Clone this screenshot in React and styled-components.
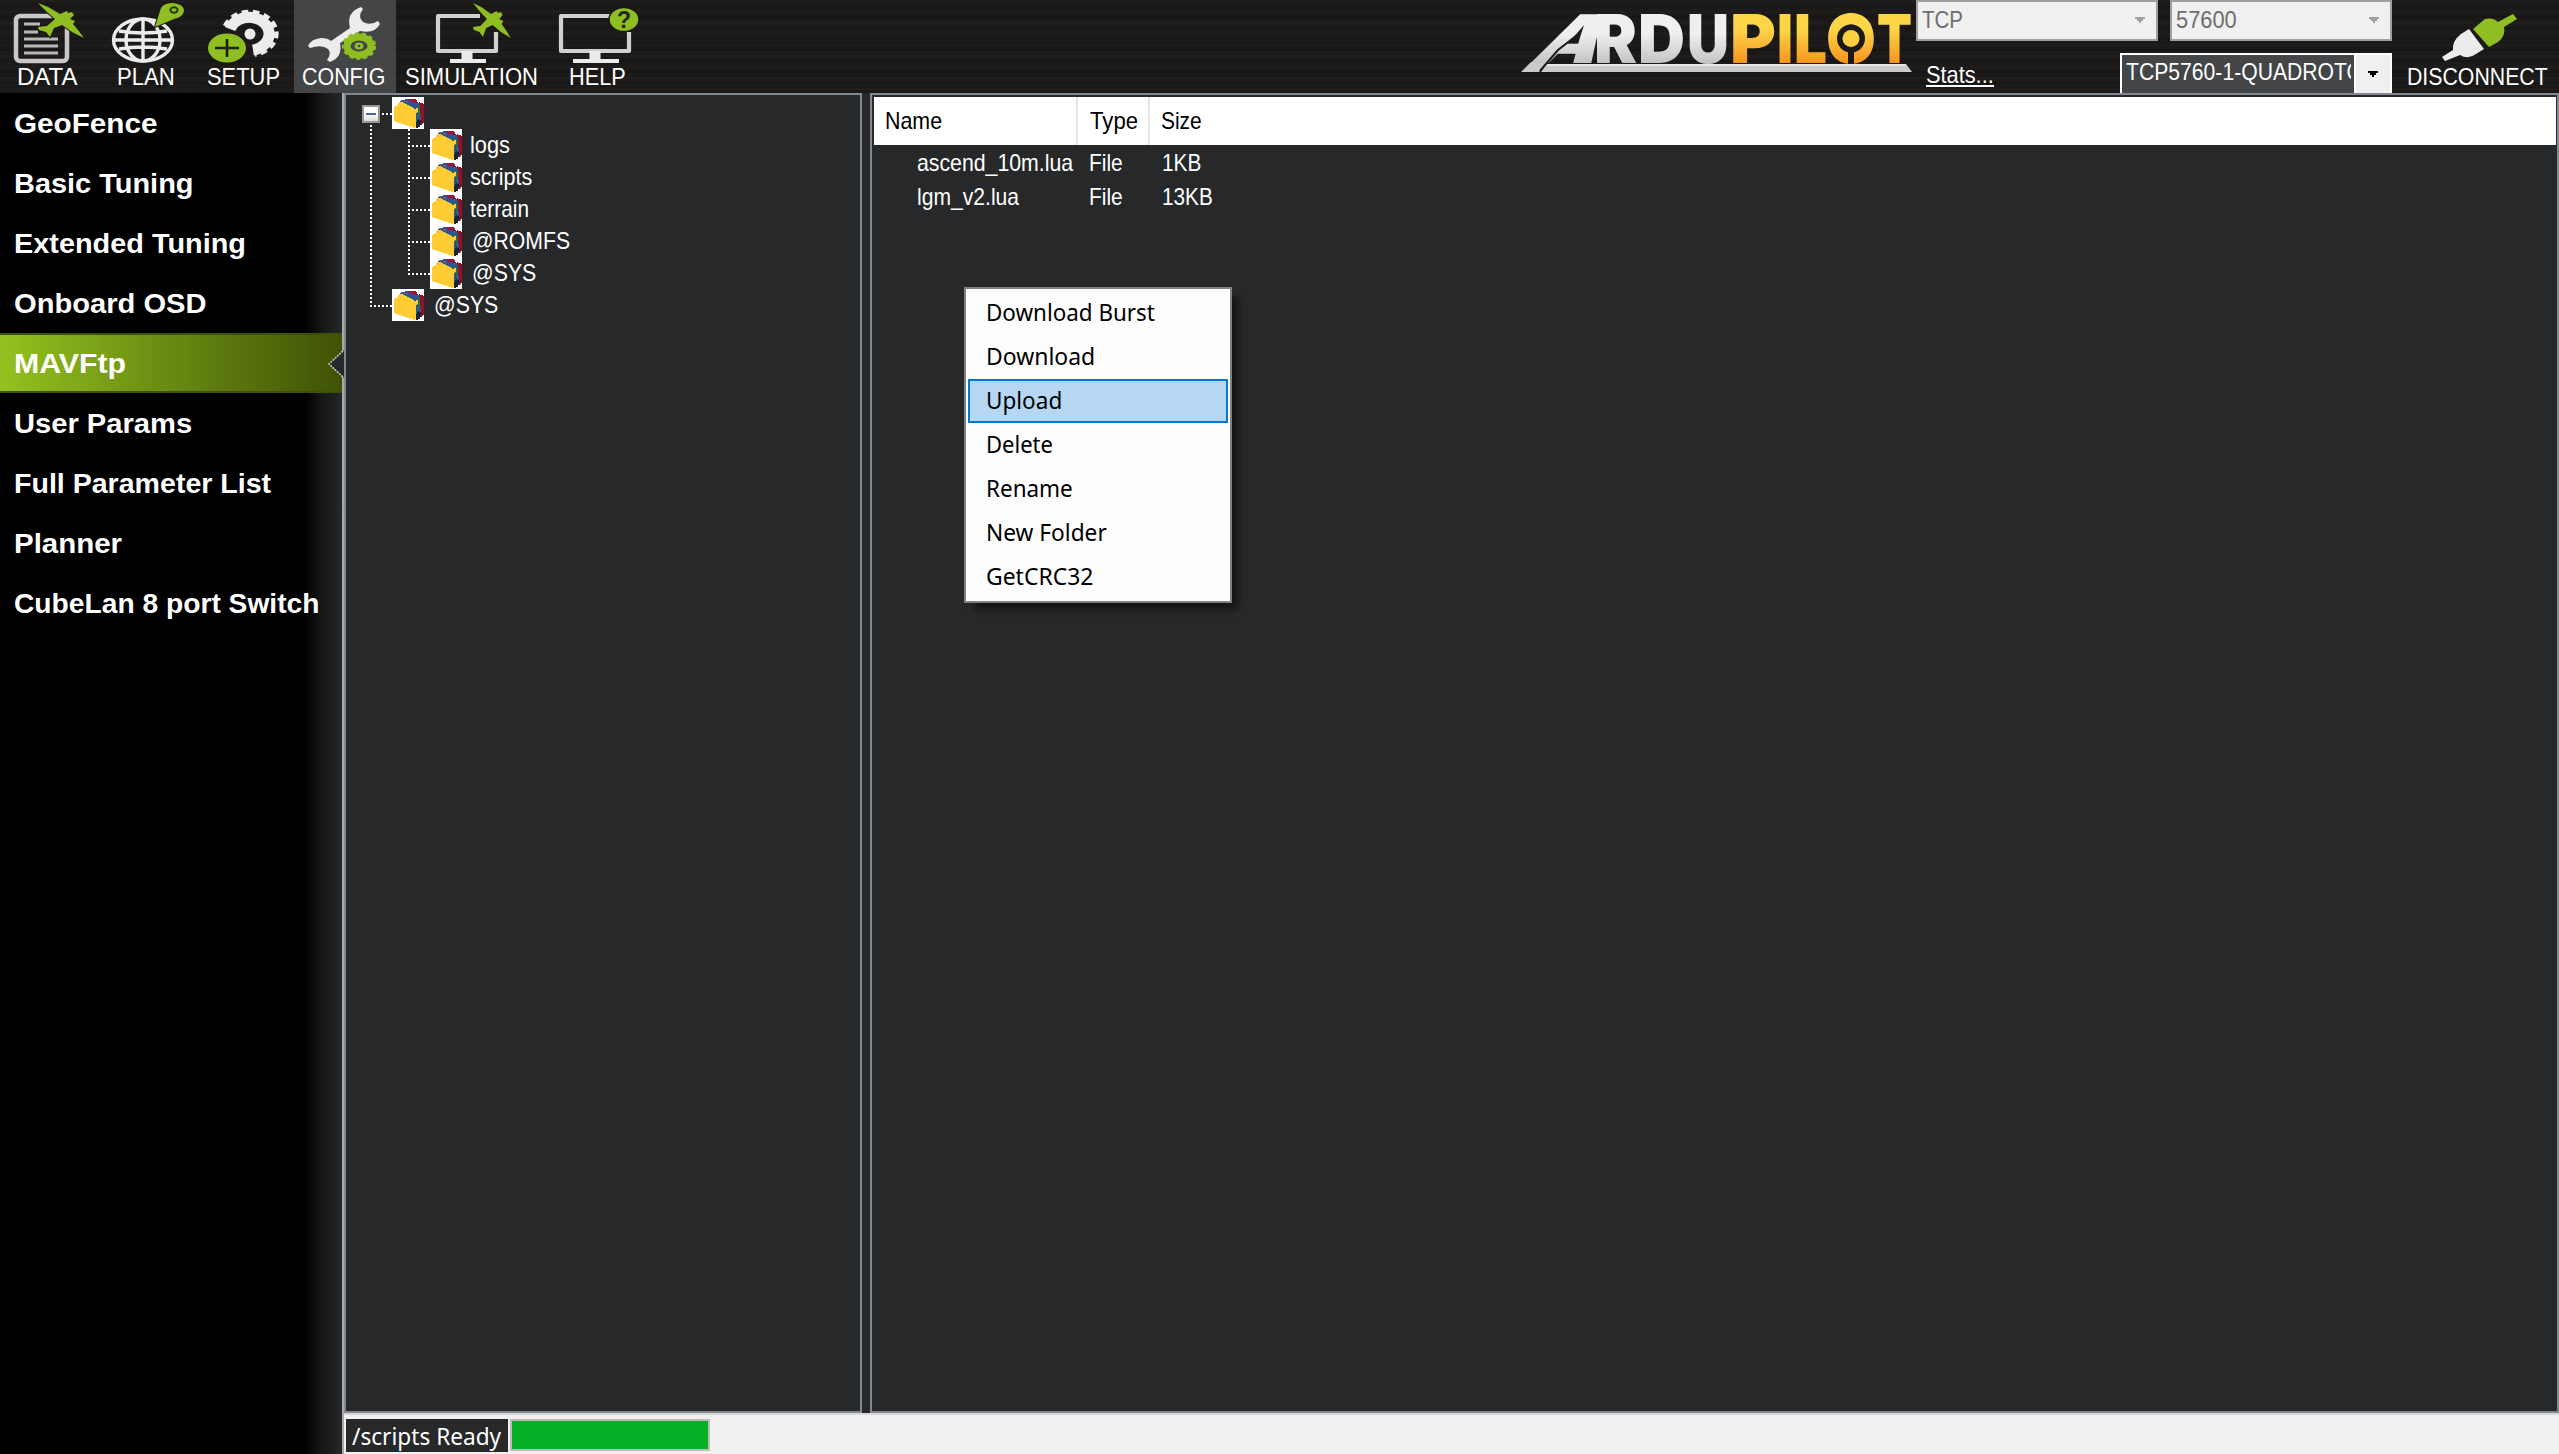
import React, { useLayoutEffect, useRef, useState } from "react";
import styled, { createGlobalStyle, css } from "styled-components";

const Global = createGlobalStyle`
  * { box-sizing: border-box; }
  html, body { margin: 0; background: #262829; }
  body { font-family: "Liberation Sans", Arial, sans-serif; font-size: 24px; color: #fff; overflow: hidden; }
`;

/* ---------- text that is condensed or widened to a given width ---------- */
const FitBox = styled.span`
  display: block;
  flex: none;
  width: ${(p) => p.$w}px;
  white-space: nowrap;
`;
const FitInner = styled.span`
  display: inline-block;
  transform-origin: 0 0;
`;
function Fit({ w, children }) {
  const ref = useRef(null);
  const [k, setK] = useState(1);
  useLayoutEffect(() => {
    setK(w / ref.current.offsetWidth);
  }, [w, children]);
  return (
    <FitBox $w={w}>
      <FitInner ref={ref} style={{ transform: `scaleX(${k})` }}>{children}</FitInner>
    </FitBox>
  );
}

/* ---------- frame ---------- */
const Window = styled.div`
  width: 2559px;
  height: 1454px;
  display: flex;
  flex-direction: column;
  overflow: hidden;
`;
const Toolbar = styled.header`
  height: 93px;
  flex: none;
  display: flex;
  background:
    repeating-linear-gradient(180deg, rgba(255, 255, 255, 0.018) 0 2px, transparent 2px 5px, rgba(0, 0, 0, 0.16) 5px 7px, transparent 7px 11px),
    #1c1a18;
`;
const Tool = styled.button`
  width: ${(p) => p.$w}px;
  height: 93px;
  padding: 0;
  border: 0;
  display: flex;
  flex-direction: column;
  align-items: center;
  font: inherit;
  line-height: 28px;
  color: #fff;
  background: ${(p) => (p.$active ? "#434547" : "transparent")};
  & > svg { display: block; flex: none; }
`;
const ToolLabel = styled.span`
  display: block;
  width: 100%;
  padding-left: ${(p) => p.$x}px;
  text-align: left;
`;
const Spacer = styled.div`
  width: ${(p) => p.$w}px;
  flex: none;
`;
const Connection = styled.div`
  width: 476px;
  height: 93px;
  flex: none;
  display: flex;
  flex-direction: column;
  justify-content: space-between;
`;
const ConnRow = styled.div`
  display: flex;
  justify-content: space-between;
`;
const Combo = styled.div`
  width: ${(p) => p.$w}px;
  height: 41px;
  display: flex;
  justify-content: space-between;
  align-items: center;
  border: 2px solid #a0a0a0;
  background: #f0f0f0;
  color: #6d6d6d;
  padding: 0 11px 2px 4px;
  line-height: 28px;
`;
const PortCombo = styled.div`
  width: 272px;
  height: 40px;
  display: flex;
  border: 2px solid #fff;
  border-bottom: 0;
  background: #434547;
  line-height: 28px;
  padding-top: 3px;
`;
const PortText = styled.div`
  width: 225px;
  margin-left: 4px;
  overflow: hidden;
  flex: none;
`;
const PortButton = styled.div`
  margin: -3px 0 0 auto;
  width: 36px;
  border-left: 2px solid #fff;
  background: #f0f0f0;
  display: flex;
  justify-content: center;
  align-items: center;
`;
const Stats = styled.a`
  margin: 8px 0 0 10px;
  height: 26px;
  line-height: 28px;
  border-bottom: 2px solid #fff;
`;
const Main = styled.div`
  flex: 1;
  display: flex;
  min-height: 0;
`;

/* ---------- sidebar ---------- */
const Sidebar = styled.nav`
  width: 344px;
  flex: none;
  border-right: 2px solid #a8a8a8;
  background: linear-gradient(90deg, #000 305px, #161717 322px, #262829 342px);
`;
const NavItem = styled.div`
  position: relative;
  height: 60px;
  padding: 14px 0 0 14px;
  font-size: 27px;
  font-weight: 700;
  line-height: 34px;
  ${(p) => p.$active && css`
    background: linear-gradient(90deg, #94c11f, #3f5205);
    box-shadow: inset 0 2px #3d5206, inset 0 -2px #3d5206;
  `}
`;
const Notch = styled.svg`
  position: absolute;
  right: -2px;
  top: 17px;
`;

/* ---------- content ---------- */
const Content = styled.section`
  flex: 1;
  display: flex;
  flex-direction: column;
  min-width: 0;
`;
const Panes = styled.div`
  height: 1320px;
  display: flex;
  gap: 8px;
  background: #262829;
`;
const Tree = styled.div`
  width: 518px;
  flex: none;
  border: 2px solid #828790;
  padding: 2px 0 0 16px;
`;
const TreeRow = styled.div`
  height: 32px;
  display: flex;
`;
const vdots = "repeating-linear-gradient(180deg, #fff 0 2px, transparent 2px 4px)";
const hdots = "repeating-linear-gradient(90deg, #fff 0 2px, transparent 2px 4px)";
const guides = {
  root: css`background: ${vdots} 8px 28px / 2px 4px no-repeat, ${hdots} 20px 16px / 10px 2px no-repeat;`,
  through: css`background: ${vdots} 8px 0 / 2px 32px no-repeat;`,
  end: css`background: ${vdots} 8px 0 / 2px 16px no-repeat, ${hdots} 8px 16px / 22px 2px no-repeat;`,
  branch: css`background: ${vdots} 16px 0 / 2px 32px no-repeat, ${hdots} 20px 16px / 18px 2px no-repeat;`,
  last: css`background: ${vdots} 16px 0 / 2px 18px no-repeat, ${hdots} 16px 16px / 22px 2px no-repeat;`,
};
const Guide = styled.div`
  width: ${(p) => p.$w}px;
  height: 32px;
  flex: none;
  ${(p) => guides[p.$kind]}
`;
const Expander = styled.div`
  width: 18px;
  height: 18px;
  margin-top: 8px;
  border: 2px solid #979797;
  background: linear-gradient(#fff 50%, #dcdcdc);
  display: flex;
  align-items: center;
  justify-content: center;
  &::before { content: ""; width: 10px; height: 2px; background: #4b63a7; }
`;
const TreeLabel = styled.div`
  padding-left: ${(p) => p.$x}px;
  line-height: 28px;
  padding-top: ${(p) => p.$y || 0}px;
`;
const List = styled.div`
  position: relative;
  flex: 1;
  border: 2px solid #828790;
  padding: 2px 1px 0 2px;
`;
const ListRow = styled.div`
  display: flex;
  height: 34px;
  line-height: 28px;
  padding-top: 4px;
`;
const ListHead = styled(ListRow)`
  height: 48px;
  padding: 0;
  background: #fff;
  color: #000;
`;
const Cell = styled.div`
  width: ${(p) => p.$w}px;
  padding-left: ${(p) => p.$x}px;
  flex: none;
`;
const HeadCell = styled(Cell)`
  border-right: ${(p) => (p.$end ? 0 : "2px solid #e5e5e5")};
  padding-top: 10px;
`;
const Menu = styled.div`
  position: absolute;
  left: 92px;
  top: 192px;
  width: 268px;
  border: 2px solid #808080;
  padding: 2px;
  background: #fdfdfd;
  color: #000;
  box-shadow: 8px 8px 7px -2px rgba(0, 0, 0, 0.5);
  font-family: "Noto Sans", "Open Sans", sans-serif;
`;
const MenuItem = styled.div`
  height: 44px;
  padding-left: 16px;
  line-height: 38px;
  border: 2px solid ${(p) => (p.$hot ? "#0078d7" : "transparent")};
  background: ${(p) => (p.$hot ? "#b5d7f3" : "transparent")};
`;
const StatusBar = styled.footer`
  flex: 1;
  display: flex;
  gap: 2px;
  padding: 4px 0 0 2px;
  border-top: 2px solid #d7d7d7;
  background: #f0f0f0;
`;
const StatusText = styled.div`
  width: 162px;
  height: 33px;
  padding-left: 6px;
  line-height: 34px;
  background: #262829;
  font-family: "Noto Sans", "Open Sans", sans-serif;
`;
const Progress = styled.div`
  width: 200px;
  height: 32px;
  border: 2px solid #bcbcbc;
  background: #06b025;
`;

/* ---------- drawings ---------- */
const GREEN = "#8fbe22";
const LIGHT = "#ececec";

const ToolIcon = styled.svg.attrs((p) => ({ width: p.$w, height: 63 }))`
  overflow: visible;
`;
const planePoints =
  "0,0 10,4 22,11 29,8 30,10 34,9 36,12 32,16 37,18 35,21 40,27 46,35 34,29 24,22 16,25 12,34 8,29 1,27 0,24 9,23 17,16 9,9";
const Plane = ({ x, y, k = 1 }) => (
  <polygon points={planePoints} transform={`translate(${x} ${y}) scale(${k} 1)`} fill={GREEN} stroke="#1c1a18" strokeWidth="2" paintOrder="stroke" />
);

const DataIcon = () => (
  <ToolIcon $w={94}>
    <rect x="16" y="16" width="51" height="45" rx="4" fill="none" stroke="#c9c7c8" strokeWidth="4.5" />
    <path d="M24 24h16M24 32h14M24 39h34M24 46h34M24 53h34" stroke="#b9b8b8" strokeWidth="3" />
    <Plane x={38} y={3} />
  </ToolIcon>
);
const PlanIcon = () => (
  <ToolIcon $w={103}>
    <g fill="none" stroke={LIGHT} strokeWidth="3.4">
      <ellipse cx="49" cy="40" rx="29.500" ry="21" />
      <ellipse cx="49" cy="40" rx="17" ry="21" />
      <path d="M49 19v42M19 40h60M25 31q24 4 48 0M25 49q24 -4 48 0" />
    </g>
    <path d="M61 27L67 8Q70 3 79 3Q90 4 90 11Q89 17 80 19Z" fill={GREEN} stroke="#1c1a18" strokeWidth="2" paintOrder="stroke" />
    <ellipse cx="80" cy="10" rx="3.600" ry="2.800" fill="none" stroke="#2d3a12" strokeWidth="2" />
  </ToolIcon>
);
const SetupIcon = () => (
  <ToolIcon $w={97}>
    <path d="M33 29A20 16.500 0 1 1 56 50" fill="none" stroke={LIGHT} strokeWidth="11" />
    <path d="M28 26A26.500 21.500 0 1 1 58 54.500" fill="none" stroke={LIGHT} strokeWidth="4.500" strokeDasharray="6.500 4.500" />
    <circle cx="53" cy="34" r="5.5" fill={LIGHT} />
    <ellipse cx="30" cy="48" rx="19" ry="14.500" fill={GREEN} stroke="#1c1a18" strokeWidth="2" paintOrder="stroke" />
    <path d="M30 39v18M18 48h24" stroke="#1c2209" strokeWidth="2.6" />
  </ToolIcon>
);
const ConfigIcon = () => (
  <ToolIcon $w={102}>
    <path d="M14 46Q17 39 27 38Q34 38 37 41L56 28Q52 12 67 7L69 9Q63 17 69 22Q76 26 84 21L86 24Q81 34 66 31L46 43Q49 57 36 62L33 60Q38 53 34 49Q28 44 16 48Z" fill={LIGHT} />
    <ellipse cx="65" cy="46" rx="12" ry="9" fill="none" stroke={GREEN} strokeWidth="7" />
    <ellipse cx="65" cy="46" rx="16" ry="12.500" fill="none" stroke={GREEN} strokeWidth="2.5" strokeDasharray="4 3" />
    <ellipse cx="65" cy="46" rx="4.500" ry="3.500" fill={GREEN} />
    <circle cx="65" cy="46" r="1.3" fill="#434547" />
  </ToolIcon>
);
const Monitor = ({ x, w }) => (
  <g fill="none" stroke="#d2d0d1" strokeWidth="4.2" strokeLinejoin="round">
    <path d={`M${x + w - 16} 16H${x}V51H${x + w}V32`} />
    <path d={`M${x + 12} 61h${w - 22}`} stroke={LIGHT} strokeWidth="4" />
    <path d={`M${x + w / 2} 51v10`} stroke={LIGHT} strokeWidth="11" />
  </g>
);
const SimIcon = () => (
  <ToolIcon $w={151}>
    <Monitor x={42} w={58} />
    <Plane x={77} y={3} k={0.82} />
  </ToolIcon>
);
const HelpIcon = () => (
  <ToolIcon $w={101}>
    <Monitor x={14} w={68} />
    <ellipse cx="77" cy="19.500" rx="15" ry="12" fill={GREEN} stroke="#1c1a18" strokeWidth="1.500" />
    <text x="77" y="27.500" textAnchor="middle" fontFamily="Liberation Sans" fontWeight="700" fontSize="23" fill="#22280f">?</text>
  </ToolIcon>
);
const PlugIcon = () => (
  <ToolIcon $w={167}>
    <path d="M53 61L50 57L61 50Q60 41 69 34L77 29L92 49L84 54Q76 60 68 55Z" fill={LIGHT} />
    <path d="M81 29L93 19Q101 17 106 22L121 14L125 19L112 27Q114 36 106 42L97 47Z" fill={GREEN} />
  </ToolIcon>
);

const letters = [
  ["R", 94, 43], ["D", 138, 47], ["U", 187, 42],
  ["P", 230, 46], ["I", 277, 16], ["L", 294, 33], ["O", 326, 50], ["T", 377, 35],
];
const Logo = () => (
  <svg width="416" height="93">
    <defs>
      <linearGradient id="silver" gradientUnits="userSpaceOnUse" x1="0" y1="14" x2="0" y2="63">
        <stop offset="0.4" stopColor="#efefef" /><stop offset="1" stopColor="#c4c4c6" />
      </linearGradient>
      <linearGradient id="gold" gradientUnits="userSpaceOnUse" x1="0" y1="14" x2="0" y2="63">
        <stop offset="0.3" stopColor="#fdd648" /><stop offset="1" stopColor="#f7941f" />
      </linearGradient>
      <linearGradient id="silverA" gradientUnits="userSpaceOnUse" x1="0" y1="-49" x2="0" y2="0">
        <stop offset="0.4" stopColor="#efefef" /><stop offset="1" stopColor="#c4c4c6" />
      </linearGradient>
    </defs>
    <polygon points="21,72 31,62 48,62 39,72" fill="#c9cacb" />
    <polygon points="46,64 406,64 412,72 41,72" fill="#c9cacb" />
    <path d="M46 65H406" stroke="#e6e6e6" strokeWidth="2" />
    <text transform="translate(29 63) skewX(-32)" textLength="64" lengthAdjust="spacingAndGlyphs" fontFamily="Inter" fontWeight="900" fontSize="67" fill="url(#silverA)">A</text>
    {letters.map(([c, x, w], i) => (
      <text key={i} x={x} y="63" textLength={w} lengthAdjust="spacingAndGlyphs" fontFamily="Inter" fontWeight="900" fontSize="67" fill={i < 3 ? "url(#silver)" : "url(#gold)"}>{c}</text>
    ))}
    <path d="M40 71L58 50L76 36" fill="none" stroke="#1c1a18" strokeWidth="2" />
    <circle cx="351" cy="38.500" r="14" fill="#1c1a18" />
    <path d="M351 38V64" stroke="#1c1a18" strokeWidth="6" />
    <circle cx="351" cy="38.500" r="8.5" fill="#fdcf43" />
  </svg>
);
const Arrow = ({ color }) => (
  <svg width="10" height="6"><path d="M0 0h10v2h-2v2h-2v2h-2v-2h-2v-2h-2z" fill={color} /></svg>
);
const FolderIcon = () => (
  <svg width="32" height="32" shapeRendering="crispEdges">
    <rect width="32" height="32" fill="#fff" />
    <polygon points="8,4 14,2 24,3 28,8 31,10 31,24 27,30 24,31 21,14 8,6" fill="#26598f" />
    <polygon points="16,2 24,2 26,6 18,5" fill="#a3123a" />
    <polygon points="27,5 32,7 32,26 29,28 28,10" fill="#8f0f2c" />
    <polygon points="25,8 28,10 28,22 26,20" fill="#2c6b4a" />
    <polygon points="9,3 15,4 17,6 9,5" fill="#5a5a80" />
    <polygon points="26,22 30,24 28,30 24,31 24,26" fill="#1c2432" />
    <polygon points="2,10 6,8 7,5 10,5 20,10 22,12 26,11 26,14 24,16 24,29 22,31 2,24" fill="#ffcc33" />
  </svg>
);

/* ---------- data ---------- */
const tools = [
  { label: "DATA", w: 94, x: 17, t: 60, Icon: DataIcon },
  { label: "PLAN", w: 103, x: 23, t: 58, Icon: PlanIcon },
  { label: "SETUP", w: 97, x: 10, t: 73, Icon: SetupIcon },
  { label: "CONFIG", w: 102, x: 8, t: 83, Icon: ConfigIcon, active: true },
  { label: "SIMULATION", w: 151, x: 9, t: 133, Icon: SimIcon },
  { label: "HELP", w: 101, x: 22, t: 57, Icon: HelpIcon },
];
const nav = [
  ["GeoFence", 144], ["Basic Tuning", 180], ["Extended Tuning", 232], ["Onboard OSD", 193],
  ["MAVFtp", 112], ["User Params", 178], ["Full Parameter List", 257], ["Planner", 108],
  ["CubeLan 8 port Switch", 306],
];
const children = [["logs", 40, 8], ["scripts", 62, 8], ["terrain", 59, 8], ["@ROMFS", 98, 10], ["@SYS", 64, 10]];
const files = [
  { name: "ascend_10m.lua", nw: 156, size: "1KB", sw: 39 },
  { name: "lgm_v2.lua", nw: 102, size: "13KB", sw: 51 },
];
const menu = [
  ["Download Burst", 169], ["Download", 109], ["Upload", 76], ["Delete", 67],
  ["Rename", 87], ["New Folder", 121], ["GetCRC32", 107],
];

export default function App() {
  return (
    <Window>
      <Global />
      <Toolbar>
        {tools.map(({ label, w, x, t, Icon, active }) => (
          <Tool key={label} $w={w} $active={active}>
            <Icon />
            <ToolLabel $x={x}><Fit w={t}>{label}</Fit></ToolLabel>
          </Tool>
        ))}
        <Spacer $w={852} />
        <Logo />
        <Connection>
          <ConnRow>
            <Combo $w={242}><Fit w={41}>TCP</Fit><Arrow color="#a0a0a0" /></Combo>
            <Combo $w={222}><Fit w={61}>57600</Fit><Arrow color="#a0a0a0" /></Combo>
          </ConnRow>
          <ConnRow>
            <Stats><Fit w={68}>Stats...</Fit></Stats>
            <PortCombo>
              <PortText><Fit w={252}>TCP5760-1-QUADROTOR</Fit></PortText>
              <PortButton><Arrow color="#000" /></PortButton>
            </PortCombo>
          </ConnRow>
        </Connection>
        <Tool $w={167}>
          <PlugIcon />
          <ToolLabel $x={15}><Fit w={141}>DISCONNECT</Fit></ToolLabel>
        </Tool>
      </Toolbar>
      <Main>
        <Sidebar>
          {nav.map(([label, w]) => (
            <NavItem key={label} $active={label === "MAVFtp"}>
              <Fit w={w}>{label}</Fit>
              {label === "MAVFtp" && (
                <Notch width="16" height="28">
                  <path d="M16 0L1 14L16 28Z" fill="#262829" />
                  <path d="M15 1L1 14L15 27" fill="none" stroke="#d0d0d0" strokeWidth="1.500" strokeDasharray="2 1" />
                </Notch>
              )}
            </NavItem>
          ))}
        </Sidebar>
        <Content>
          <Panes>
            <Tree>
              <TreeRow><Guide $w={30} $kind="root"><Expander /></Guide><FolderIcon /></TreeRow>
              {children.map(([label, w, x], i) => (
                <TreeRow key={label}>
                  <Guide $w={30} $kind="through" />
                  <Guide $w={38} $kind={i === children.length - 1 ? "last" : "branch"} />
                  <FolderIcon />
                  <TreeLabel $x={x} $y={2}><Fit w={w}>{label}</Fit></TreeLabel>
                </TreeRow>
              ))}
              <TreeRow>
                <Guide $w={30} $kind="end" />
                <FolderIcon />
                <TreeLabel $x={10} $y={2}><Fit w={64}>@SYS</Fit></TreeLabel>
              </TreeRow>
            </Tree>
            <List>
              <ListHead>
                <HeadCell $w={204} $x={11}><Fit w={57}>Name</Fit></HeadCell>
                <HeadCell $w={72} $x={12}><Fit w={48}>Type</Fit></HeadCell>
                <HeadCell $w={300} $x={11} $end><Fit w={41}>Size</Fit></HeadCell>
              </ListHead>
              {files.map((f) => (
                <ListRow key={f.name}>
                  <Cell $w={204} $x={43}><Fit w={f.nw}>{f.name}</Fit></Cell>
                  <Cell $w={72} $x={11}><Fit w={34}>File</Fit></Cell>
                  <Cell $w={300} $x={12}><Fit w={f.sw}>{f.size}</Fit></Cell>
                </ListRow>
              ))}
              <Menu>
                {menu.map(([label, w]) => (
                  <MenuItem key={label} $hot={label === "Upload"}><Fit w={w}>{label}</Fit></MenuItem>
                ))}
              </Menu>
            </List>
          </Panes>
          <StatusBar>
            <StatusText><Fit w={149}>/scripts Ready</Fit></StatusText>
            <Progress />
          </StatusBar>
        </Content>
      </Main>
    </Window>
  );
}
